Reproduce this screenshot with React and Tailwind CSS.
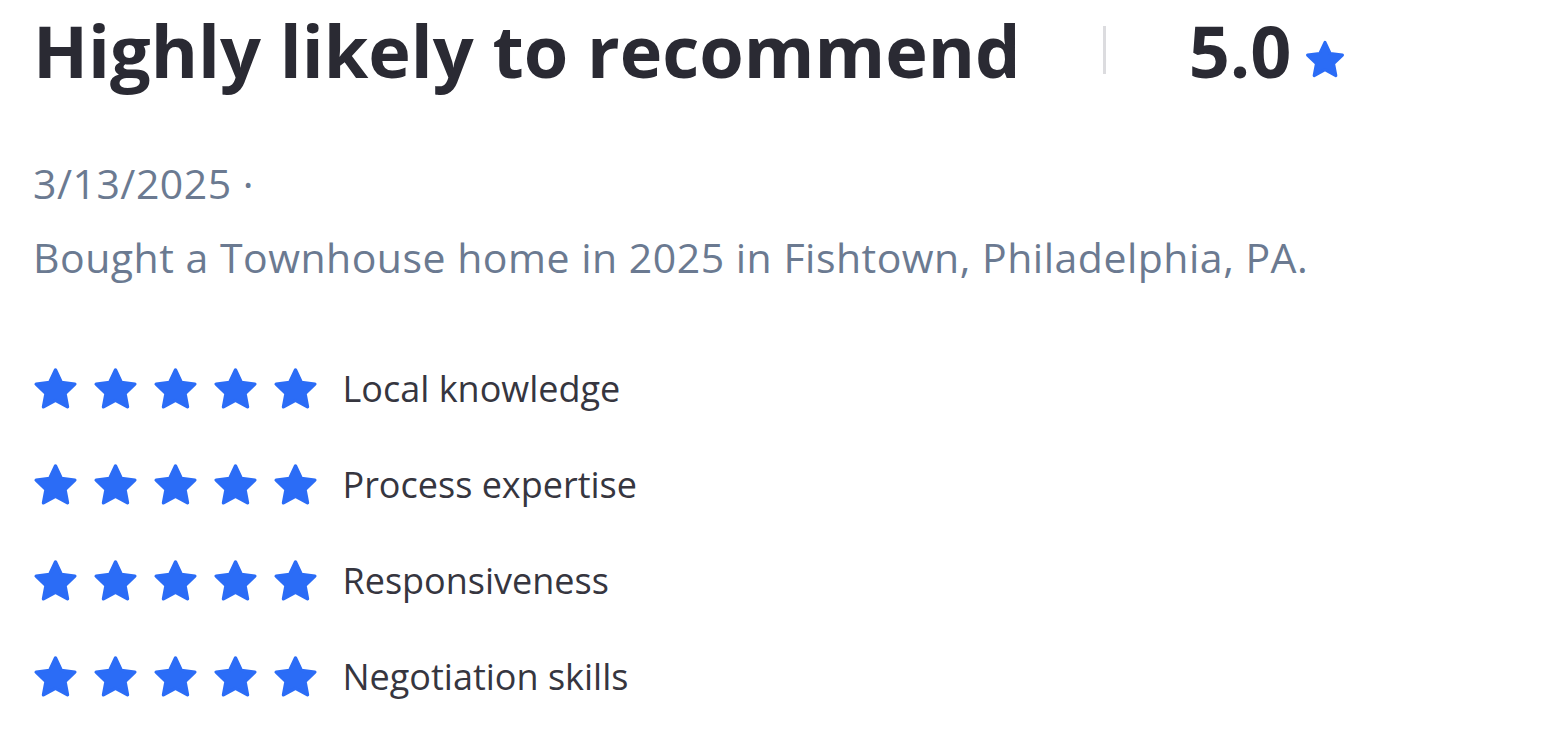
import React from "react";

const Star = ({ size = 42, className = "" }) => (
  <svg width={size} height={size} viewBox="0 0 24 24" className={className}>
    <path
      d="M12 2.8l2.75 5.85 6.35.8-4.65 4.4 1.2 6.3L12 17.1l-5.65 3.05 1.2-6.3L2.9 9.45l6.35-.8z"
      fill="#2b6cf6"
      stroke="#2b6cf6"
      strokeWidth="1.6"
      strokeLinejoin="round"
    />
  </svg>
);

const ratings = ["Local knowledge", "Process expertise", "Responsiveness", "Negotiation skills"];

export default function App() {
  return (
    <div className="w-[1566px] h-[738px] bg-white px-[33px] pt-0" style={{ fontFamily: '"Open Sans", sans-serif' }}>
      <div className="flex items-center">
        <h1 className="text-[72px] leading-[100px] font-bold text-[#2a2a33]">Highly likely to recommend</h1>
        <div className="w-[3px] h-[48px] bg-[#dcdcdf] ml-[82px] mr-[83px]" />
        <span className="text-[72px] leading-[100px] font-bold text-[#2a2a33]">5.0</span>
        <Star size={46} className="ml-[10px] mt-[20px]" />
      </div>
      <div className="mt-[46px] text-[41px] leading-[74px] tracking-[0.5px] text-[#6b7a91]">
        <div>3/13/2025 ·</div>
        <div>Bought a Townhouse home in 2025 in Fishtown, Philadelphia, PA.</div>
      </div>
      <div className="mt-[47px] flex flex-col">
        {ratings.map((r) => (
          <div key={r} className="flex items-center h-[96px]">
            <div className="flex gap-[9px] -ml-[3.5px]">
              {[0, 1, 2, 3, 4].map((i) => (
                <Star key={i} size={51} />
              ))}
            </div>
            <span className="ml-[22px] text-[36px] text-[#36363f]">{r}</span>
          </div>
        ))}
      </div>
    </div>
  );
}
